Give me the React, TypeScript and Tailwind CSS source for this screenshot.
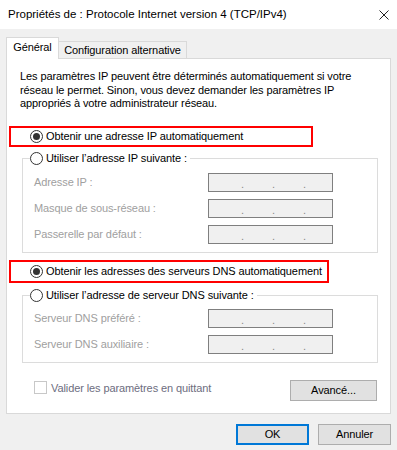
const font = { fontFamily: '"Liberation Sans", Arial, sans-serif' };

function Radio({ checked }: { checked?: boolean }) {
  return (
    <span className="flex h-[13px] w-[13px] shrink-0 items-center justify-center rounded-full border border-[#333333] bg-white">
      {checked && <span className="h-[7px] w-[7px] rounded-full bg-[#333333]" />}
    </span>
  );
}

function IpField() {
  return (
    <div className="relative flex h-[19px] w-[125px] items-end border border-[#7f7f7f] bg-[#f0f0f0] pb-[1px] text-[11px] leading-none text-[#8a8a8a]">
      <span className="ml-[32px]">.</span>
      <span className="ml-[28px]">.</span>
      <span className="ml-[28px]">.</span>
    </div>
  );
}

function FieldRow({ label }: { label: string }) {
  return (
    <div className="flex items-center">
      <span className="w-[185px] pl-[11px] text-[#a0a0a0]">{label}</span>
      <IpField />
    </div>
  );
}

function Group({ legend, fields, legendGap }: { legend: string; fields: string[]; legendGap: string }) {
  return (
    <div className="mr-[12px] ml-[15px] border border-[#dcdcdc] pb-[8px]">
      <div className="-mt-[8px] ml-[7px] flex h-[16px] w-fit items-center gap-[3px] bg-white pr-[3px]">
        <Radio />
        <span>{legend}</span>
      </div>
      <div className={`flex flex-col gap-[7px] ${legendGap}`}>
        {fields.map((f) => (
          <FieldRow key={f} label={f} />
        ))}
      </div>
    </div>
  );
}

export default function App() {
  return (
    <div
      className="flex h-[450px] w-[397px] flex-col whitespace-nowrap bg-[#f0f0f0] text-[11px] tracking-[-0.1px] text-black"
      style={font}
    >
      {/* barre de titre */}
      <div className="flex h-[29px] shrink-0 items-center justify-between bg-white pr-[8px] pl-[8px]">
        <span className="text-[11.5px] tracking-normal">Propriétés de : Protocole Internet version 4 (TCP/IPv4)</span>
        <svg width="10" height="10" viewBox="0 0 10 10">
          <path d="M0.5 0.5 L9.5 9.5 M9.5 0.5 L0.5 9.5" stroke="#222" strokeWidth="1" fill="none" />
        </svg>
      </div>

      <div className="flex flex-col px-[6px] pt-[8px]">
        {/* onglets */}
        <div className="flex items-end">
          <div className="relative z-10 -mb-px flex h-[22px] w-[53px] items-center justify-center border border-b-0 border-[#d9d9d9] bg-white pb-[2px]">
            Général
          </div>
          <div className="-mb-px flex h-[18px] w-[128px] items-center justify-center border border-b-0 border-l-0 border-[#d9d9d9] bg-[#f0f0f0]">
            Configuration alternative
          </div>
        </div>

        {/* panneau */}
        <div className="flex h-[356px] flex-col border border-[#d9d9d9] bg-white">
          <p className="mt-[11px] pl-[13px] leading-[13.5px]">
            Les paramètres IP peuvent être déterminés automatiquement si votre
            <br />
            réseau le permet. Sinon, vous devez demander les paramètres IP
            <br />
            appropriés à votre administrateur réseau.
          </p>

          <div className="mt-[15px] ml-[2px] flex h-[21px] w-[304px] items-center gap-[3px] border-2 border-[#ff0000] pl-[19px]">
            <Radio checked />
            <span>Obtenir une adresse IP automatiquement</span>
          </div>

          <div className="mt-[11px]">
            <Group
              legend="Utiliser l’adresse IP suivante :"
              fields={["Adresse IP :", "Masque de sous-réseau :", "Passerelle par défaut :"]}
              legendGap="mt-[6px]"
            />
          </div>

          <div className="mt-[7px] ml-[2px] flex h-[23px] w-[320px] items-center gap-[3px] border-2 border-[#ff0000] pl-[19px]">
            <Radio checked />
            <span>Obtenir les adresses des serveurs DNS automatiquement</span>
          </div>

          <div className="mt-[12px]">
            <Group
              legend="Utiliser l’adresse de serveur DNS suivante :"
              fields={["Serveur DNS préféré :", "Serveur DNS auxiliaire :"]}
              legendGap="mt-[5px]"
            />
          </div>

          <div className="mt-[17px] flex items-start justify-between pr-[13px] pl-[27px]">
            <div className="flex items-center gap-[4px]">
              <span className="h-[13px] w-[13px] border border-[#c8c8c8] bg-white" />
              <span className="text-[#6d6d80]">Valider les paramètres en quittant</span>
            </div>
            <button className="flex h-[21px] w-[87px] items-center justify-center border border-[#adadad] bg-[#e1e1e1]">
              Avancé...
            </button>
          </div>
        </div>

        {/* boutons */}
        <div className="mt-[10px] flex justify-end gap-[9px]">
          <button className="flex h-[21px] w-[73px] items-center justify-center border-2 border-[#0078d7] bg-[#e1e1e1]">
            OK
          </button>
          <button className="flex h-[21px] w-[73px] items-center justify-center border border-[#adadad] bg-[#e1e1e1]">
            Annuler
          </button>
        </div>
      </div>
    </div>
  );
}
